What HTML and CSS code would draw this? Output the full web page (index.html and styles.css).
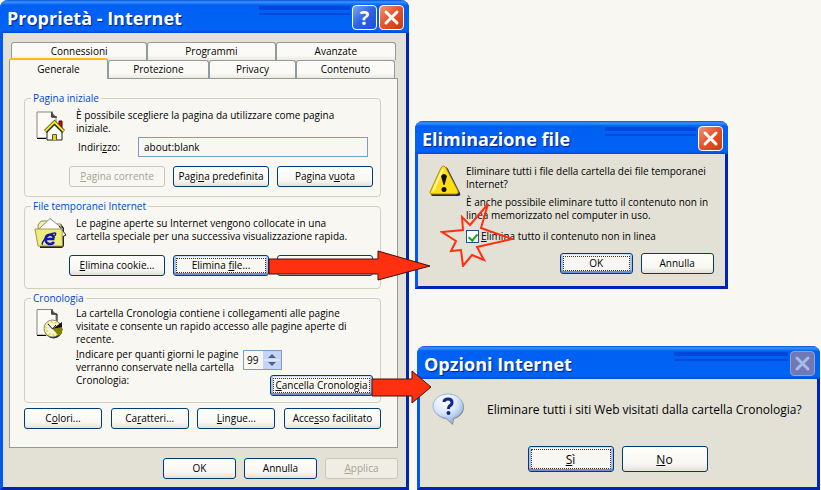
FILE: index.html
```html
<!DOCTYPE html>
<html lang="it">
<head>
  <meta charset="UTF-8">
  <meta name="viewport" content="width=device-width, initial-scale=1.0">
  <title>Proprietà - Internet</title>
  <link rel="stylesheet" href="styles.css">
</head>
<body>
  <main class="desktop">

    <section class="window properties">
      <header class="titlebar">
        <h1>Proprietà - Internet</h1>
        <span class="stripes"></span>
        <button type="button" class="cap help" aria-label="Guida">?</button>
        <button type="button" class="cap close" aria-label="Chiudi">
          <svg viewBox="0 0 23 23"><path d="M6 6L17 17M17 6L6 17"/></svg>
        </button>
      </header>

      <div class="properties-body">
        <nav class="tabs">
          <div class="tab-row back">
            <button type="button" class="tab connessioni">Connessioni</button>
            <button type="button" class="tab programmi">Programmi</button>
            <button type="button" class="tab avanzate">Avanzate</button>
          </div>
          <div class="tab-row front">
            <button type="button" class="tab active">Generale</button>
            <button type="button" class="tab protezione">Protezione</button>
            <button type="button" class="tab privacy">Privacy</button>
            <button type="button" class="tab contenuto">Contenuto</button>
          </div>
        </nav>

        <form class="panel">
          <fieldset class="group home">
            <legend>Pagina iniziale</legend>
            <svg class="icon" viewBox="0 0 32 32">
              <path d="M3 3H17L22 8V29H3Z" fill="#fbfaf6" stroke="#8d847c"/>
              <path d="M18 2.500V8H23M3 29.500H12" fill="none" stroke="#000"/>
              <path d="M17 3.500L22 8.500H17Z" fill="#444"/>
              <path d="M25 12H28V19H25Z" fill="#d01010" stroke="#400"/>
              <path d="M13 21L20.500 14L28 21V31H13Z" fill="#fffef8" stroke="#222"/>
              <path d="M11.500 22.500L20.500 13.500L29.500 22.500" fill="none" stroke="#222" stroke-width="4"/>
              <path d="M11.500 22L20.500 13L29.500 22" fill="none" stroke="#f4ee10" stroke-width="2"/>
              <path d="M18.500 31V25.500H22.500V31" fill="#e4d800" stroke="#555"/>
            </svg>
            <div class="content">
              <p>È possibile scegliere la pagina da utilizzare come pagina<br>iniziale.</p>
              <div class="address">
                <label for="indirizzo">Indiri<u>z</u>zo:</label>
                <input type="text" id="indirizzo" value="about:blank">
              </div>
            </div>
            <div class="buttons">
              <button type="button" class="btn" disabled><u>P</u>agina corrente</button>
              <button type="button" class="btn">Pagi<u>n</u>a predefinita</button>
              <button type="button" class="btn">Pagina v<u>u</u>ota</button>
            </div>
          </fieldset>

          <fieldset class="group files">
            <legend>File temporanei Internet</legend>
            <svg class="icon" viewBox="0 0 32 32">
              <path d="M5 8L8 4H15L18 7H27L30 11V29L28 31H6Z" fill="#222"/>
              <path d="M4 8L7 4H14L17 7H27V26H5Z" fill="#f3ee9a" stroke="#8d8d70"/>
              <path d="M3 14L16 1.500L29 12L25 18H4Z" fill="#fff" stroke="#888"/>
              <path d="M25 9L32 18L28 20" fill="#fff" stroke="#222"/>
              <path d="M1 12H28L28.500 29H4Z" fill="#f0ec7c" stroke="#9a9860"/>
              <path d="M20.500 22H11.500C12 16.500 19 16.500 20 21M11.500 22.500C12 28 18 28 20 25" fill="none" stroke="#0d18b8" stroke-width="2.500"/>
              <path d="M9 27C6 28 13 17 20 16C23 15.500 21 18 21 19" fill="none" stroke="#0d18b8" stroke-width="1.500"/>
            </svg>
            <div class="content">
              <p>Le pagine aperte su Internet vengono collocate in una<br>cartella speciale per una successiva visualizzazione rapida.</p>
            </div>
            <div class="buttons">
              <button type="button" class="btn"><u>E</u>limina cookie...</button>
              <button type="button" class="btn focused">Elimina <u>f</u>ile...</button>
              <button type="button" class="btn" aria-label="Impostazioni"></button>
            </div>
          </fieldset>

          <fieldset class="group history">
            <legend>Cronologia</legend>
            <svg class="icon" viewBox="0 0 32 32">
              <path d="M3 2.500H17L22 7V28H3Z" fill="#fbfaf6" stroke="#8d847c"/>
              <path d="M18 2V7H23V14M3 28.500H12" fill="none" stroke="#000"/>
              <path d="M17 3L22 7.500H17Z" fill="#444"/>
              <circle cx="19.500" cy="22.500" r="9" fill="#222"/>
              <circle cx="18.500" cy="21.500" r="8.500" fill="#f4f2df" stroke="#8a8a70"/>
              <circle cx="18.500" cy="21.500" r="6.500" fill="none" stroke="#ece420" stroke-width="2" stroke-dasharray="2 2"/>
              <path d="M18.500 22L28 15V21Z" fill="#111"/>
              <path d="M18.500 22L28 20V26L25 29Z" fill="#858000"/>
              <path d="M18.500 22L14 17M18.500 22L22 18" stroke="#111"/>
            </svg>
            <div class="content">
              <p>La cartella Cronologia contiene i collegamenti alle pagine<br>visitate e consente un rapido accesso alle pagine aperte di<br>recente.</p>
              <div class="days">
                <label for="giorni"><u>I</u>ndicare per quanti giorni le pagine<br>verranno conservate nella cartella<br>Cronologia:</label>
                <div class="days-controls">
                  <span class="spinner">
                    <input type="text" id="giorni" value="99">
                    <svg viewBox="0 0 18 18"><path d="M5 7L9 3L13 7ZM5 11L9 15L13 11Z"/><path class="split" d="M1 9H17"/></svg>
                  </span>
                  <button type="button" class="btn focused"><u>C</u>ancella Cronologia</button>
                </div>
              </div>
            </div>
          </fieldset>

          <div class="options">
            <button type="button" class="btn">C<u>o</u>lori...</button>
            <button type="button" class="btn">Ca<u>r</u>atteri...</button>
            <button type="button" class="btn"><u>L</u>ingue...</button>
            <button type="button" class="btn wide">Acce<u>s</u>so facilitato</button>
          </div>
        </form>

        <footer class="actions">
          <button type="button" class="btn">OK</button>
          <button type="button" class="btn">Annulla</button>
          <button type="button" class="btn" disabled><u>A</u>pplica</button>
        </footer>
      </div>
    </section>

    <div class="dialogs">
      <section class="window delete-files">
        <header class="titlebar">
          <h2>Eliminazione file</h2>
          <span class="stripes"></span>
          <button type="button" class="cap close" aria-label="Chiudi">
            <svg viewBox="0 0 23 23"><path d="M6 6L17 17M17 6L6 17"/></svg>
          </button>
        </header>
        <div class="dialog-body">
          <svg class="symbol" viewBox="0 0 32 32">
            <path d="M16 2Q18 2 19 4L31 28Q32 31 29 31H4Q1 31 3 28Z" fill="#1c2468"/>
            <path d="M14.500 1Q16 1 17 3L29 26Q30 29 27 29H3Q0 29 1.500 26L12 3Q13 1 14.500 1Z" fill="#ffdf14" stroke="#b08a00"/>
            <path d="M14 4L4 26" stroke="#fff79a" stroke-width="2"/>
            <path d="M12 11Q15 7 18 11L15.500 20H14.500Z" fill="#111"/>
            <circle cx="15" cy="24.500" r="2.500" fill="#111"/>
          </svg>
          <div class="message">
            <p>Eliminare tutti i file della cartella dei file temporanei<br>Internet?</p>
            <p>È anche possibile eliminare tutto il contenuto non in<br>linea memorizzato nel computer in uso.</p>
            <label class="check">
              <input type="checkbox" checked>
              <span><u>E</u>limina tutto il contenuto non in linea</span>
            </label>
          </div>
          <div class="dialog-buttons">
            <button type="button" class="btn focused">OK</button>
            <button type="button" class="btn">Annulla</button>
          </div>
        </div>
      </section>

      <section class="window options-dialog">
        <header class="titlebar">
          <h2>Opzioni Internet</h2>
          <span class="stripes"></span>
          <button type="button" class="cap close" aria-label="Chiudi" disabled>
            <svg viewBox="0 0 23 23"><path d="M6 6L17 17M17 6L6 17"/></svg>
          </button>
        </header>
        <div class="dialog-body">
          <svg class="symbol" viewBox="0 0 32 32">
            <defs>
              <radialGradient id="bubble" cx="0.4" cy="0.25" r="0.8">
                <stop offset="0" stop-color="#ffffff"/>
                <stop offset="0.5" stop-color="#dbe8fa"/>
                <stop offset="1" stop-color="#86aadf"/>
              </radialGradient>
            </defs>
            <path d="M17 2C25 2 32 7 32 14C32 20 28 24 22 26L21 32L14 26C7 25 2 20 2 14C2 7 9 2 17 2Z" fill="#85868c"/>
            <path d="M16 1C24 1 31 6 31 13C31 19 27 23 21 25L20 30L14 25C6 24 1 19 1 13C1 6 8 1 16 1Z" fill="url(#bubble)" stroke="#9db6dc"/>
            <path d="M12 9Q12 6 16 6Q20 6 20 9.500Q20 12 17.500 13Q16.500 14 16.500 16" fill="none" stroke="#0b2a8c" stroke-width="3"/>
            <circle cx="16.500" cy="20" r="2" fill="#0b2a8c"/>
          </svg>
          <p class="question">Eliminare tutti i siti Web visitati dalla cartella Cronologia?</p>
          <div class="dialog-buttons">
            <button type="button" class="btn focused"><u>S</u>ì</button>
            <button type="button" class="btn"><u>N</u>o</button>
          </div>
        </div>
      </section>
    </div>

    <!-- callouts lying over the windows -->
    <svg class="callout arrow-files" viewBox="0 0 164 32">
      <path d="M1 9H110V1L162 16L110 30V24H1Z"/>
    </svg>
    <svg class="callout arrow-history" viewBox="0 0 62 36">
      <path d="M1 10H41V2L60 18L41 34V27H1Z"/>
    </svg>
    <svg class="callout burst" viewBox="0 0 74 66">
      <path d="M48 3L41 27L72 38L37 46L44 59L32 54L23 65L21 49L11 50L16 40L2 31L23 29L22 16L30 24Z"/>
    </svg>
  </main>
</body>
</html>
```
FILE: styles.css
```css
* {
  box-sizing: border-box;
}

body {
  margin: 0;
  background: #f8f7f2;
  color: #000;
  font-family: "Open Sans", "Noto Sans", Tahoma, sans-serif;
  font-size: 10px;
  line-height: 13px;
}

p,
h1,
h2 {
  margin: 0;
}

button,
input {
  font: inherit;
  color: inherit;
}

.desktop {
  position: relative;
  display: grid;
  grid-template-columns: minmax(0, 409fr) minmax(0, 406fr);
  gap: 6px;
  align-items: start;
  min-height: 100vh;
}

/* windows */
.window {
  background: #e3e1d6;
  border: 3px solid #0058f0;
  border-top: 0;
  border-right-color: #0024b4;
  border-bottom-color: #0024b4;
  border-radius: 8px 8px 0 0;
}

.titlebar {
  display: flex;
  align-items: center;
  gap: 2px;
  height: 33px;
  margin: 0 -3px;
  padding: 2px 5px 0 7px;
  background: linear-gradient(#0a50d8 0, #3c94ff 2px, #0060f4 5px, #0062f6 30px, #0048d8 33px);
  border-radius: 8px 8px 0 0;
}

.titlebar h1,
.titlebar h2 {
  color: #fff;
  font-size: 18px;
  font-weight: 700;
  line-height: 26px;
  white-space: nowrap;
  text-shadow: 1px 1px 1px #00218c;
}

.stripes {
  width: 91px;
  height: 9px;
  margin: -14px 0 0 auto;
  background: linear-gradient(#0048dc 4px, transparent 4px, transparent 7px, #0048dc 7px);
}

.cap {
  width: 25px;
  height: 25px;
  padding: 0;
  border: 1px solid #fff;
  border-radius: 4px;
  color: #fff;
  font-size: 20px;
  font-weight: 700;
  line-height: 22px;
}

.cap svg {
  display: block;
  width: 23px;
  height: 23px;
  fill: none;
  stroke: #fff;
  stroke-width: 3;
  stroke-linecap: round;
}

.help {
  background: linear-gradient(135deg, #7ea4f4, #2c62e4 50%, #1c50d8);
}

.close {
  background: linear-gradient(135deg, #f09478, #e45028 50%, #cc3c10);
}

.close:disabled {
  background: #7078b8;
  border-color: #96a2d4;
}

.close:disabled svg {
  stroke: #a8bce8;
}

/* buttons */
.btn {
  height: 21px;
  padding: 0;
  background: linear-gradient(#fefefc, #f8f7f2 70%, #e4e1d6);
  border: 1px solid #003c74;
  border-radius: 3px;
  line-height: 17px;
  white-space: nowrap;
}

.btn:disabled {
  background: #f8f7f2;
  border-color: #c9c7ba;
  color: #a5a394;
}

.focused {
  background: #f8f7f2;
  box-shadow: inset 0 1px 0 #cfe0ff, inset 0 -2px 0 #6f8fdd, inset 2px 0 0 #a9c0f0, inset -2px 0 0 #a9c0f0;
  outline: 1px dotted #443322;
  outline-offset: -4px;
}

/* properties window */
.properties-body {
  padding: 9px 8px 8px 6px;
}

.tab-row {
  display: flex;
  height: 18px;
}

.back {
  padding: 0 2px;
}

.tab {
  padding: 0;
  background: linear-gradient(#fbfaf6 70%, #eceade);
  border: 1px solid #919b9c;
  border-bottom: 0;
  border-radius: 3px 3px 0 0;
  line-height: 17px;
}

.connessioni {
  flex: 136;
}

.programmi {
  flex: 128;
}

.avanzate {
  flex: 120;
}

.tab.active {
  position: relative;
  flex: 99;
  height: 21px;
  margin-top: -2px;
  background: #f8f7f2;
  border-top: 2px solid #ffb820;
}

.protezione {
  flex: 101;
}

.privacy {
  flex: 87;
}

.contenuto {
  flex: 99;
  margin-right: 3px;
}

.panel {
  display: flex;
  flex-direction: column;
  gap: 2px;
  padding: 12px 16px 18px 14px;
  background: #f8f7f2;
  border: 1px solid #919b9c;
}

.group {
  display: grid;
  grid-template-columns: 32px 1fr;
  column-gap: 10px;
  min-width: 0;
  margin: 0;
  padding: 4px 7px 9px 9px;
  border: 1px solid #d0d0bf;
  border-radius: 4px;
}

.group legend {
  padding: 0 2px;
  margin-left: -3px;
  color: #0046d5;
  line-height: 14px;
}

.icon {
  width: 32px;
  height: 32px;
}

.content {
  white-space: nowrap;
}

.address {
  display: flex;
  align-items: center;
  justify-content: space-between;
  margin: 2px 5px 9px 2px;
}

.address input {
  width: 230px;
  height: 20px;
  padding: 0 5px;
  background: #f8f7f2;
  border: 1px solid #7a9cc8;
}

.buttons {
  grid-column: 1 / 3;
  display: flex;
  justify-content: flex-end;
  gap: 8px;
}

.buttons .btn {
  width: 96px;
}

.files {
  padding-bottom: 12px;
}

.files .buttons {
  margin-top: 6px;
}

.history {
  padding-top: 2px;
  padding-bottom: 6px;
}

.days {
  display: flex;
  gap: 5px;
  margin-top: 2px;
}

.days label {
  width: 162px;
}

.days-controls {
  flex: 1;
  display: flex;
  flex-direction: column;
  gap: 5px;
  padding-top: 2px;
}

.days-controls .btn {
  align-self: flex-end;
  width: 103px;
}

.spinner {
  display: flex;
  width: 39px;
  height: 20px;
  border: 1px solid #7a9cc8;
}

.spinner input {
  width: 19px;
  padding: 0 0 0 3px;
  background: none;
  border: 0;
}

.spinner svg {
  width: 18px;
  height: 18px;
  background: #c4d4f8;
  fill: #4d6185;
}

.spinner .split {
  stroke: #f8f7f2;
}

.options {
  display: flex;
  justify-content: space-between;
  margin-top: 3px;
}

.options .btn {
  width: 78px;
}

.options .wide {
  width: 97px;
}

.actions {
  display: flex;
  justify-content: flex-end;
  gap: 8px;
  margin-top: 10px;
}

.actions .btn {
  width: 73px;
}

.actions .btn:disabled {
  background: #f0eee4;
}

/* dialogs */
.dialogs {
  display: flex;
  flex-direction: column;
  align-items: flex-start;
  padding-top: 121px;
}

.dialog-body {
  display: grid;
  grid-template-columns: 32px 1fr;
}

.delete-files {
  width: 77%;
}

.delete-files .dialog-body {
  column-gap: 5px;
  padding: 11px 11px 12px 11px;
}

.symbol {
  width: 32px;
  height: 32px;
}

.message {
  white-space: nowrap;
}

.message p {
  margin-bottom: 5px;
}

.check {
  display: flex;
  align-items: center;
  gap: 2px;
  padding-top: 3px;
}

.check input {
  appearance: none;
  width: 13px;
  height: 13px;
  margin: 0;
  background: #fff;
  border: 1px solid #1c5180;
}

.check input:checked::before {
  content: "";
  display: block;
  width: 4px;
  height: 7px;
  margin: 1px 3px;
  border: solid #21a121;
  border-width: 0 2px 2px 0;
  transform: rotate(40deg);
}

.dialog-buttons {
  grid-column: 1 / 3;
  display: flex;
  justify-content: flex-end;
  gap: 8px;
  margin-top: 10px;
}

.dialog-buttons .btn {
  width: 73px;
}

.options-dialog {
  align-self: stretch;
  margin: 57px 1px 0 2px;
}

.options-dialog .stripes {
  width: 114px;
}

.options-dialog .dialog-body {
  column-gap: 23px;
  padding: 14px 4px 15px 12px;
  font-size: 12px;
}

.question {
  align-self: center;
  white-space: nowrap;
}

.options-dialog .dialog-buttons {
  justify-content: center;
  margin-top: 21px;
  padding-right: 10px;
}

.options-dialog .btn {
  width: 86px;
  height: 26px;
}

/* callouts */
.callout {
  position: absolute;
  fill: #ff3010;
  stroke: #401008;
}

.arrow-files {
  left: 268px;
  top: 250px;
  width: 164px;
}

.arrow-history {
  left: 371px;
  top: 369px;
  width: 62px;
}

.burst {
  left: 440px;
  top: 201px;
  width: 74px;
  fill: none;
  stroke: #ff3010;
  stroke-width: 2;
}
```
